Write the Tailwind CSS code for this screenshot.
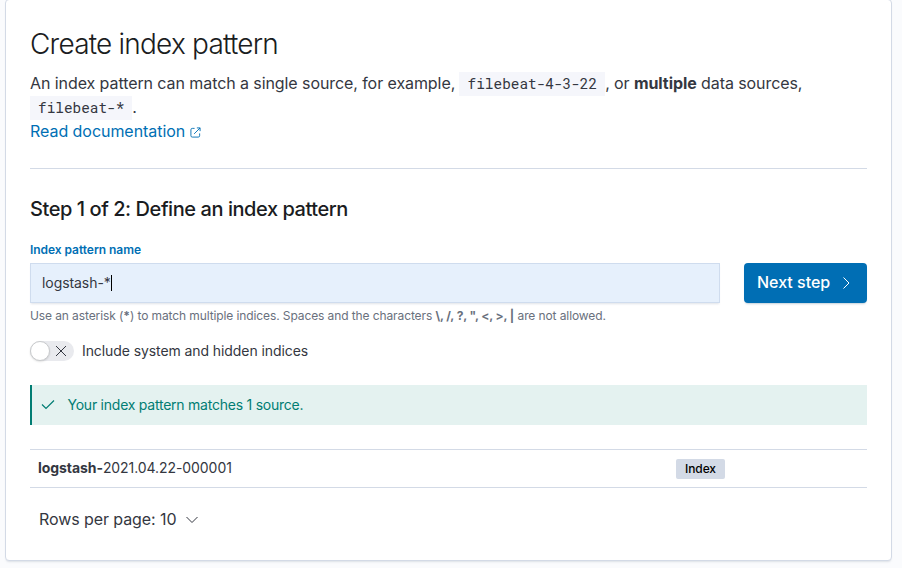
<!DOCTYPE html>
<html lang="en">
<head>
<meta charset="utf-8">
<title>Create index pattern</title>
<script src="https://cdn.jsdelivr.net/npm/@tailwindcss/browser@4"></script>
</head>
<body class="h-[568px] overflow-hidden bg-[#fafbfd] pl-[5px] pr-[10px] font-['Inter',sans-serif] text-[#343741]">
<main class="-mt-px h-[562px] rounded border border-[#d3dae6] bg-white px-6 pt-6 shadow-[0_2px_2px_-1px_rgba(152,162,179,0.3)]">
  <h1 class="h-10 text-[28px] leading-10 font-light tracking-[-0.028em] whitespace-nowrap text-[#1a1c21]">Create index pattern</h1>
  <p class="mt-[7px] text-base leading-6 tracking-[-0.005em] whitespace-nowrap">An index pattern can match a single source, for example, <code class="relative top-px -ml-px inline-block h-6 bg-[#f5f6fb] pr-2 pl-[9px] align-top font-['Roboto_Mono','DejaVu_Sans_Mono',monospace] text-[14.4px] leading-6 tracking-normal">filebeat-4-3-22</code>, or <strong class="font-bold">multiple</strong> data sources,<br><code class="relative top-px inline-block h-6 bg-[#f5f6fb] px-2 align-top font-['Roboto_Mono','DejaVu_Sans_Mono',monospace] text-[14.4px] leading-6 tracking-normal">filebeat-*</code>.</p>
  <a class="flex h-6 items-center gap-[5px] text-base leading-6 tracking-[-0.003em] text-[#006fb4]" href="#">Read documentation
    <svg class="mt-[3px] size-[11px]" viewBox="0 0 12 12" fill="none" stroke="currentColor" stroke-width="1"><path d="M5 1.500H2.500A1.500 1.500 0 0 0 1 3v6.500A1.500 1.500 0 0 0 2.500 11H9a1.500 1.500 0 0 0 1.500-1.500V7M7.500 1h3.500v3.500M11 1 4.500 7.500"/></svg>
  </a>
  <hr class="mt-[25px] border-[#d3dae6]">
  <h2 class="mt-6 h-8 text-xl leading-8 font-medium tracking-[-0.022em] text-[#1a1c21]">Step 1 of 2: Define an index pattern</h2>
  <div class="mt-[17px] flex justify-between">
    <div class="w-[690px]">
      <label class="block h-[21px] text-xs leading-4 font-semibold tracking-[-0.004em] text-[#006fb4]">Index pattern name</label>
      <div class="flex h-10 items-center border border-[#cfdcee] bg-[#e6f0fc] px-[11px] text-sm shadow-[0_2px_2px_-1px_rgba(152,162,179,0.3)]"><span class="tracking-[-0.005em]">logstash-*</span><span class="h-4 w-px bg-black"></span></div>
      <p class="mt-[5px] h-4 text-xs leading-4 tracking-[-0.0085em] whitespace-nowrap text-[#69707d]">Use an asterisk (<strong>*</strong>) to match multiple indices. Spaces and the characters <strong>\, /, ?, ", &lt;, &gt;, |</strong> are not allowed.</p>
    </div>
    <button class="mt-[21px] flex h-10 w-[123px] items-center rounded bg-[#006eb4] pb-[2px] pl-[13px] text-base font-medium text-white shadow-[0_2px_2px_-1px_rgba(54,97,126,0.3)]">Next step
      <svg class="mt-[2px] ml-2 size-4" viewBox="0 0 16 16" fill="none" stroke="currentColor"><path d="m5.500 2.500 5.500 5.500-5.500 5.500"/></svg>
    </button>
  </div>
  <div class="mt-[17px] flex h-5 items-center text-sm">
    <div class="flex h-5 w-11 items-center rounded-full bg-[#e9eaee]">
      <span class="size-5 rounded-full border border-[#c9cbcd] bg-white shadow-[0_1px_2px_rgba(0,0,0,0.12)]"></span>
      <svg class="ml-[5px] size-3" viewBox="0 0 12 12" fill="none" stroke="#343741"><path d="m1 1 10 10M11 1 1 11"/></svg>
    </div>
    <span class="ml-2 tracking-[-0.006em]">Include system and hidden indices</span>
  </div>
  <div class="mt-6 flex h-10 items-center border-l-2 border-[#017d73] bg-[#e4f2f0] pl-2 text-sm tracking-[-0.017em] text-[#017d73]">
    <svg class="-mt-px size-4" viewBox="0 0 16 16" fill="none" stroke="currentColor" stroke-width="1.2"><path d="m2 7.500 4 4 8-8"/></svg>
    <span class="ml-[11.500px]">Your index pattern matches 1 source.</span>
  </div>
  <div class="mt-6 flex h-[39px] items-center border-y border-[#d3dae6] pl-2 text-sm">
    <span class="w-[638px] pb-[2px] tracking-[-0.005em]"><strong>logstash-</strong>2021.04.22-000001</span>
    <span class="flex h-5 w-[49px] items-center justify-center rounded-[2px] bg-[#d3dae6] text-xs font-medium tracking-[-0.01em] text-black">Index</span>
  </div>
  <button class="mt-[19px] ml-[9px] flex h-6 items-center gap-2 text-base tracking-[-0.005em]">Rows per page: 10
    <svg class="mt-[2px] size-4" viewBox="0 0 16 16" fill="none" stroke="currentColor"><path d="m2.500 5 5.500 5.500L13.500 5"/></svg>
  </button>
</main>
</body>
</html>
